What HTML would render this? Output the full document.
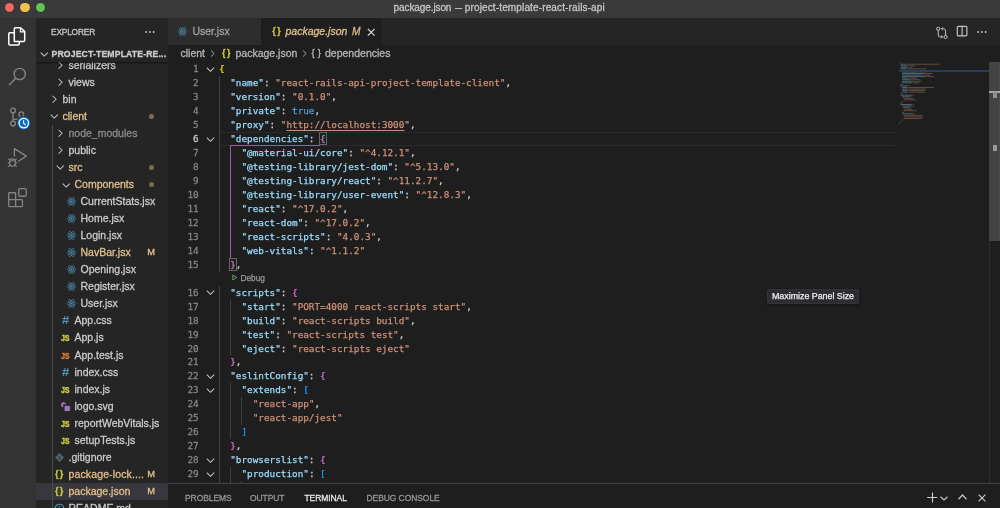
<!DOCTYPE html>
<html lang="en"><head><meta charset="utf-8"><title>package.json — project-template-react-rails-api</title>
<style>
*{box-sizing:border-box;margin:0;padding:0}
html,body{width:1000px;height:508px;overflow:hidden;background:#1e1e1e}
body{position:relative;font-family:"Liberation Sans",sans-serif;color:#ccc;-webkit-font-smoothing:antialiased}
.abs,#titlebar,#activity,#sidebar,#tabs,#crumbs,#editor,#panel,.g,.ln,.cl,.fold,.tr,.tw,.tl,.fi,.ti,.dot,.bM{position:absolute}
#titlebar{left:0;top:0;width:1000px;height:18px;background:#3a3a3a}
#titlebar .t{position:absolute;left:0;width:1000px;top:0;height:16px;line-height:16px;text-align:center;font-size:10px;color:#c8c8c8;letter-spacing:0.03px}
.light{position:absolute;top:2.9px;width:9.6px;height:9.6px;border-radius:50%;box-shadow:0 0 0 0.5px #2c2c2c}
#activity{left:0;top:18px;width:36px;height:490px;background:#333}
#sidebar{left:36px;top:18px;width:132px;height:490px;background:#252526;overflow:hidden}
#tabs{left:168px;top:18px;width:832px;height:27px;background:#252526}
#crumbs{left:168px;top:45px;width:832px;height:17px;background:#1e1e1e;font-size:10.5px;color:#b8b8b8}
#editor{left:0;top:0;width:1000px;height:484px;overflow:hidden;pointer-events:none}
.ln{left:168px;width:30.7px;text-align:right;height:13.97px;line-height:13.97px;font-family:"DejaVu Sans Mono","Liberation Mono",monospace;font-size:9.33px;color:#858585}
.ln.act{color:#c6c6c6}
.cl{-webkit-text-stroke:0.25px;left:219px;height:13.97px;line-height:13.97px;white-space:pre;font-family:"DejaVu Sans Mono","Liberation Mono",monospace;font-size:9.33px;color:#d4d4d4}
.k{color:#9cdcfe}.s{color:#ce9178}.b{color:#569cd6}
.u{text-decoration:underline;text-underline-offset:1.5px;text-decoration-thickness:1px}
.bm{outline:1px solid #646464;outline-offset:-0.5px;background:rgba(0,100,0,0.1)}
.fold{left:203.6px;width:13px;height:13px}
.g{width:1px}
#mm i{position:absolute;height:1.1px;display:block}
.lens{left:231px;font-family:"Liberation Sans",sans-serif;font-size:8.3px;color:#999}
.lens .play{width:7px;height:7px;vertical-align:-0.5px;margin-right:2.5px}
.tr{left:0;width:168px;height:17.03px}
.tr.sel{background:#37373d}
.tw{top:2.3px;width:12.5px;height:12.5px}
.tl{top:0;height:17.03px;line-height:17.03px;font-size:10.5px;white-space:nowrap}
.fi{top:3px;width:11px;height:11px}
.ti{top:0;height:17.03px;line-height:17.03px;font-family:"Liberation Sans",sans-serif}
.dot{left:148.7px;top:6px;width:5px;height:5px;border-radius:50%;background:#7d6c52}
.bM{left:147.3px;top:0;line-height:17.03px;font-size:9.3px;color:#e2c08d}
</style></head><body>
<div id="root" style="position:absolute;left:0;top:0;width:1000px;height:508px;will-change:transform;-webkit-text-stroke:0.28px">

<div id="titlebar">
  <div class="light" style="left:4.7px;background:#ec6a5f"></div>
  <div class="light" style="left:20.2px;background:#f5bf4f"></div>
  <div class="light" style="left:35.7px;background:#61c455"></div>
  <div class="t" style="text-align:left;left:393.6px;white-space:nowrap"><span style="letter-spacing:-0.1px">package.json</span> <span style="display:inline-block;transform:scaleX(0.7);transform-origin:0 50%;margin-right:-3px;margin-left:0.8px">—</span> <span style="letter-spacing:0.14px">project-template-react-rails-api</span></div>
</div>

<div id="activity">
  <!-- files -->
  <svg class="abs" style="left:6px;top:7px" width="22" height="22" viewBox="0 0 22 22" fill="none" stroke="#fff" stroke-width="1.5" stroke-linejoin="round">
    <path d="M8.3 16.5 V3.8 a1 1 0 0 1 1-1 H14.6 L18.7 6.6 V15.5 a1 1 0 0 1 -1 1 Z"/>
    <path d="M14.4 3 V6.9 H18.5" stroke-width="1.2"/>
    <path d="M8.3 7.8 H3.8 a1 1 0 0 0 -1 1 V19.1 a1 1 0 0 0 1 1 H12.2 a1 1 0 0 0 1 -1 V16.5"/>
  </svg>
  <!-- search -->
  <svg class="abs" style="left:6px;top:45px" width="24" height="24" viewBox="0 0 24 24" fill="none" stroke="#858585" stroke-width="1.4">
    <circle cx="13.7" cy="11" r="5.6"/><path d="M9.7 15.2 L3 22.3"/>
  </svg>
  <!-- scm -->
  <svg class="abs" style="left:6px;top:86px" width="26" height="28" viewBox="0 0 26 28" fill="none" stroke="#858585" stroke-width="1.3">
    <circle cx="7" cy="6.6" r="2.4"/><circle cx="7" cy="19.6" r="2.4"/><circle cx="15.3" cy="10.3" r="2.4"/>
    <path d="M7 9 V17.2 M15.3 12.7 C15.3 15.3 11 15 7 15.6"/>
    <circle cx="17.8" cy="19.1" r="7" fill="#0a6cc4" stroke="#2f2f2f" stroke-width="0.9"/>
    <circle cx="17.8" cy="19.1" r="4.7" stroke="#fff" stroke-width="1.3"/>
    <path d="M17.6 16.3 V19.3 L19.8 20.9" stroke="#fff" stroke-width="1.1"/>
  </svg>
  <!-- debug -->
  <svg class="abs" style="left:0;top:122px" width="36" height="36" viewBox="0 0 36 36" fill="none" stroke="#858585" stroke-width="1.3" stroke-linejoin="round">
    <path d="M14.4 16.6 V8.6 L26.4 16.1 L18.3 21.3"/>
    <ellipse cx="12.5" cy="22.6" rx="2.9" ry="3.7"/>
    <path d="M10 20.8 h5 M7.6 22.8 h2 M15.4 22.8 h2 M8.2 18.6 l2 1.7 M16.8 18.6 l-2 1.7 M8.2 26.8 l2 -1.8 M16.8 26.8 l-2 -1.8" stroke-width="1.1"/>
  </svg>
  <!-- extensions -->
  <svg class="abs" style="left:6px;top:168px" width="24" height="24" viewBox="0 0 24 24" fill="none" stroke="#858585" stroke-width="1.3" stroke-linejoin="round">
    <path d="M3.55 6.75 H8.8 a0.8 0.8 0 0 1 0.8 0.8 V13.7 H15.65 a0.8 0.8 0 0 1 0.8 0.8 V19.75 a0.8 0.8 0 0 1 -0.8 0.8 H3.55 a0.8 0.8 0 0 1 -0.8 -0.8 V7.55 a0.8 0.8 0 0 1 0.8 -0.8 Z M2.75 13.7 H9.6 V20.55"/>
    <rect x="12.75" y="2.55" width="7.5" height="7.7" rx="1.3"/>
  </svg>
</div>

<div id="sidebar">
  <div class="abs" style="left:0;top:0;width:132px;height:490px">
    <div style="position:absolute;left:-36px;top:-18px;width:168px;height:508px">
<div class="tr" style="top:57.00px"><svg class="tw" style="left:53.8px" viewBox="0 0 16 16"><path d="M5.8 3.5 L10.3 8 L5.8 12.5" fill="none" stroke="#c5c5c5" stroke-width="1.3"/></svg><span class="tl" style="left:68.5px;color:#ccc">serializers</span></div>
<div class="tr" style="top:74.03px"><svg class="tw" style="left:53.8px" viewBox="0 0 16 16"><path d="M5.8 3.5 L10.3 8 L5.8 12.5" fill="none" stroke="#c5c5c5" stroke-width="1.3"/></svg><span class="tl" style="left:68.5px;color:#ccc">views</span></div>
<div class="tr" style="top:91.06px"><svg class="tw" style="left:47.8px" viewBox="0 0 16 16"><path d="M5.8 3.5 L10.3 8 L5.8 12.5" fill="none" stroke="#c5c5c5" stroke-width="1.3"/></svg><span class="tl" style="left:62.5px;color:#ccc">bin</span></div>
<div class="tr" style="top:108.09px"><svg class="tw" style="left:47.8px" viewBox="0 0 16 16"><path d="M3.5 5.8 L8 10.3 L12.5 5.8" fill="none" stroke="#c5c5c5" stroke-width="1.3"/></svg><span class="tl" style="left:62.5px;color:#e2c08d">client</span><span class="dot"></span></div>
<div class="tr" style="top:125.12px"><svg class="tw" style="left:53.8px" viewBox="0 0 16 16"><path d="M5.8 3.5 L10.3 8 L5.8 12.5" fill="none" stroke="#c5c5c5" stroke-width="1.3"/></svg><span class="tl" style="left:68.5px;color:#8c8c8c">node_modules</span></div>
<div class="tr" style="top:142.15px"><svg class="tw" style="left:53.8px" viewBox="0 0 16 16"><path d="M5.8 3.5 L10.3 8 L5.8 12.5" fill="none" stroke="#c5c5c5" stroke-width="1.3"/></svg><span class="tl" style="left:68.5px;color:#ccc">public</span></div>
<div class="tr" style="top:159.18px"><svg class="tw" style="left:53.8px" viewBox="0 0 16 16"><path d="M3.5 5.8 L8 10.3 L12.5 5.8" fill="none" stroke="#c5c5c5" stroke-width="1.3"/></svg><span class="tl" style="left:68.5px;color:#e2c08d">src</span><span class="dot"></span></div>
<div class="tr" style="top:176.21px"><svg class="tw" style="left:59.8px" viewBox="0 0 16 16"><path d="M3.5 5.8 L8 10.3 L12.5 5.8" fill="none" stroke="#c5c5c5" stroke-width="1.3"/></svg><span class="tl" style="left:74.5px;color:#e2c08d">Components</span><span class="dot"></span></div>
<div class="tr" style="top:193.24px"><svg class="fi" style="left:66.0px" viewBox="-8 -8 16 16"><g fill="none" stroke="#4d93b2" stroke-width="0.8"><ellipse rx="6.6" ry="2.6"/><ellipse rx="6.6" ry="2.6" transform="rotate(60)"/><ellipse rx="6.6" ry="2.6" transform="rotate(120)"/></g><circle r="1.3" fill="#519aba"/></svg><span class="tl" style="left:80.5px;color:#ccc">CurrentStats.jsx</span></div>
<div class="tr" style="top:210.27px"><svg class="fi" style="left:66.0px" viewBox="-8 -8 16 16"><g fill="none" stroke="#4d93b2" stroke-width="0.8"><ellipse rx="6.6" ry="2.6"/><ellipse rx="6.6" ry="2.6" transform="rotate(60)"/><ellipse rx="6.6" ry="2.6" transform="rotate(120)"/></g><circle r="1.3" fill="#519aba"/></svg><span class="tl" style="left:80.5px;color:#ccc">Home.jsx</span></div>
<div class="tr" style="top:227.30px"><svg class="fi" style="left:66.0px" viewBox="-8 -8 16 16"><g fill="none" stroke="#4d93b2" stroke-width="0.8"><ellipse rx="6.6" ry="2.6"/><ellipse rx="6.6" ry="2.6" transform="rotate(60)"/><ellipse rx="6.6" ry="2.6" transform="rotate(120)"/></g><circle r="1.3" fill="#519aba"/></svg><span class="tl" style="left:80.5px;color:#ccc">Login.jsx</span></div>
<div class="tr" style="top:244.33px"><svg class="fi" style="left:66.0px" viewBox="-8 -8 16 16"><g fill="none" stroke="#4d93b2" stroke-width="0.8"><ellipse rx="6.6" ry="2.6"/><ellipse rx="6.6" ry="2.6" transform="rotate(60)"/><ellipse rx="6.6" ry="2.6" transform="rotate(120)"/></g><circle r="1.3" fill="#519aba"/></svg><span class="tl" style="left:80.5px;color:#e2c08d">NavBar.jsx</span><span class="bM">M</span></div>
<div class="tr" style="top:261.36px"><svg class="fi" style="left:66.0px" viewBox="-8 -8 16 16"><g fill="none" stroke="#4d93b2" stroke-width="0.8"><ellipse rx="6.6" ry="2.6"/><ellipse rx="6.6" ry="2.6" transform="rotate(60)"/><ellipse rx="6.6" ry="2.6" transform="rotate(120)"/></g><circle r="1.3" fill="#519aba"/></svg><span class="tl" style="left:80.5px;color:#ccc">Opening.jsx</span></div>
<div class="tr" style="top:278.39px"><svg class="fi" style="left:66.0px" viewBox="-8 -8 16 16"><g fill="none" stroke="#4d93b2" stroke-width="0.8"><ellipse rx="6.6" ry="2.6"/><ellipse rx="6.6" ry="2.6" transform="rotate(60)"/><ellipse rx="6.6" ry="2.6" transform="rotate(120)"/></g><circle r="1.3" fill="#519aba"/></svg><span class="tl" style="left:80.5px;color:#ccc">Register.jsx</span></div>
<div class="tr" style="top:295.42px"><svg class="fi" style="left:66.0px" viewBox="-8 -8 16 16"><g fill="none" stroke="#4d93b2" stroke-width="0.8"><ellipse rx="6.6" ry="2.6"/><ellipse rx="6.6" ry="2.6" transform="rotate(60)"/><ellipse rx="6.6" ry="2.6" transform="rotate(120)"/></g><circle r="1.3" fill="#519aba"/></svg><span class="tl" style="left:80.5px;color:#ccc">User.jsx</span></div>
<div class="tr" style="top:312.45px"><span class="ti" style="left:61.7px;color:#519aba;font-size:10px;font-weight:bold;transform:scaleX(1.3);transform-origin:0 50%;-webkit-text-stroke:0">#</span><span class="tl" style="left:74.5px;color:#ccc">App.css</span></div>
<div class="tr" style="top:329.48px"><span class="ti" style="left:61.1px;color:#cbcb41;font-size:9.6px;font-weight:bold;letter-spacing:-0.2px;transform:scaleX(0.74);transform-origin:0 50%;-webkit-text-stroke:0.45px">JS</span><span class="tl" style="left:74.5px;color:#ccc">App.js</span></div>
<div class="tr" style="top:346.51px"><span class="ti" style="left:61.1px;color:#e37933;font-size:9.6px;font-weight:bold;letter-spacing:-0.2px;transform:scaleX(0.74);transform-origin:0 50%;-webkit-text-stroke:0.45px">JS</span><span class="tl" style="left:74.5px;color:#ccc">App.test.js</span></div>
<div class="tr" style="top:363.54px"><span class="ti" style="left:61.7px;color:#519aba;font-size:10px;font-weight:bold;transform:scaleX(1.3);transform-origin:0 50%;-webkit-text-stroke:0">#</span><span class="tl" style="left:74.5px;color:#ccc">index.css</span></div>
<div class="tr" style="top:380.57px"><span class="ti" style="left:61.1px;color:#cbcb41;font-size:9.6px;font-weight:bold;letter-spacing:-0.2px;transform:scaleX(0.74);transform-origin:0 50%;-webkit-text-stroke:0.45px">JS</span><span class="tl" style="left:74.5px;color:#ccc">index.js</span></div>
<div class="tr" style="top:397.60px"><svg class="fi" style="left:59.8px" viewBox="0 0 11 11"><circle cx="3.5" cy="3.7" r="2.5" fill="#a074c4"/><circle cx="4.3" cy="4.4" r="1.3" fill="#252526"/><rect x="4.1" y="4.4" width="6.2" height="6.2" fill="#a074c4" stroke="#252526" stroke-width="0.9"/></svg><span class="tl" style="left:74.5px;color:#ccc">logo.svg</span></div>
<div class="tr" style="top:414.63px"><span class="ti" style="left:61.1px;color:#cbcb41;font-size:9.6px;font-weight:bold;letter-spacing:-0.2px;transform:scaleX(0.74);transform-origin:0 50%;-webkit-text-stroke:0.45px">JS</span><span class="tl" style="left:74.5px;color:#ccc">reportWebVitals.js</span></div>
<div class="tr" style="top:431.66px"><span class="ti" style="left:61.1px;color:#cbcb41;font-size:9.6px;font-weight:bold;letter-spacing:-0.2px;transform:scaleX(0.74);transform-origin:0 50%;-webkit-text-stroke:0.45px">JS</span><span class="tl" style="left:74.5px;color:#ccc">setupTests.js</span></div>
<div class="tr" style="top:448.69px"><svg class="fi" style="left:54.0px" viewBox="0 0 11 11"><rect x="2.3" y="2.3" width="6.4" height="6.4" transform="rotate(45 5.5 5.5)" fill="#4b6470"/><path d="M4.2 4 L6.5 6.3 M5.5 5.3 L5.5 7.5" stroke="#252526" stroke-width="0.8" fill="none"/></svg><span class="tl" style="left:68.5px;color:#ccc">.gitignore</span></div>
<div class="tr" style="top:465.72px"><span class="ti" style="left:54.9px;color:#cbcb41;font-size:9px;font-weight:bold;letter-spacing:1.4px">{}</span><span class="tl" style="left:68.5px;color:#e2c08d;letter-spacing:0.13px">package-lock....</span><span class="bM">M</span></div>
<div class="tr sel" style="top:482.75px"><span class="ti" style="left:54.9px;color:#cbcb41;font-size:9px;font-weight:bold;letter-spacing:1.4px">{}</span><span class="tl" style="left:68.5px;color:#e2c08d">package.json</span><span class="bM">M</span></div>
<div class="tr" style="top:499.78px"><svg class="fi" style="left:54.0px" viewBox="0 0 11 11"><circle cx="5.5" cy="5.5" r="4.3" fill="none" stroke="#519aba" stroke-width="1.1"/><path d="M5.5 5 L5.5 8 M5.5 3 L5.5 4" stroke="#519aba" stroke-width="1.1"/></svg><span class="tl" style="left:68.5px;color:#ccc">README.md</span></div>
      <div class="abs" style="left:51.6px;top:125px;width:1px;height:400px;background:#4c4c4c"></div>
    </div>
  </div>
  <div class="abs" style="left:0;top:0;width:132px;height:44px;background:#252526;box-shadow:0 1px 2px rgba(0,0,0,0.55)">
    <div class="abs" style="left:15px;top:8px;line-height:12px;font-size:8.4px;color:#c4c4c4;letter-spacing:-0.2px">EXPLORER</div>
    <svg class="abs" style="left:108px;top:11px" width="12" height="6" viewBox="0 0 12 6" fill="#c5c5c5"><circle cx="2.2" cy="3" r="0.95"/><circle cx="6" cy="3" r="0.95"/><circle cx="9.6" cy="3" r="0.95"/></svg>
    <svg class="abs" style="left:1.5px;top:29.5px" width="12.5" height="12.5" viewBox="0 0 16 16"><path d="M3.5 5.8 L8 10.3 L12.5 5.8" fill="none" stroke="#c5c5c5" stroke-width="1.3"/></svg>
    <div class="abs" style="left:15.5px;top:27.7px;height:17px;line-height:17px;font-size:8.7px;font-weight:bold;color:#ccc;white-space:nowrap;letter-spacing:0.13px">PROJECT-TEMPLATE-RE...</div>
  </div>
</div>

<div id="tabs">
  <div class="abs" style="left:0;top:0;width:92.5px;height:27px;background:#2d2d2d">
    <svg class="abs" style="left:9px;top:8px" width="11" height="11" viewBox="-8 -8 16 16"><g fill="none" stroke="#4d93b2" stroke-width="0.8"><ellipse rx="6.6" ry="2.6"/><ellipse rx="6.6" ry="2.6" transform="rotate(60)"/><ellipse rx="6.6" ry="2.6" transform="rotate(120)"/></g><circle r="1.3" fill="#519aba"/></svg>
    <span class="abs" style="left:24.5px;top:0;line-height:27px;font-size:10.45px;color:#a2a2a2">User.jsx</span>
  </div>
  <div class="abs" style="left:92.5px;top:0;width:121px;height:27px;background:#1e1e1e">
    <span class="abs" style="left:11.8px;top:0;line-height:26px;font-size:9px;font-weight:bold;color:#cbcb41;letter-spacing:1.5px">{}</span>
    <span class="abs" style="left:25px;top:0;line-height:27px;font-size:10.5px;color:#e2c08d;font-style:italic;white-space:nowrap">package.json <span style="font-size:10.2px;color:#d9b988;margin-left:1.8px">M</span></span>
    <svg class="abs" style="left:106.6px;top:9.6px" width="8.4" height="8.4" viewBox="0 0 8 8"><path d="M0.8 0.8 L7.2 7.2 M7.2 0.8 L0.8 7.2" stroke="#dcdcdc" stroke-width="1.15"/></svg>
  </div>
  <!-- right actions -->
  <svg class="abs" style="left:767px;top:6.5px" width="14" height="14" viewBox="0 0 14 14" fill="none" stroke="#c5c5c5" stroke-width="1">
    <circle cx="3.2" cy="3.8" r="1.6"/><circle cx="10.6" cy="11.9" r="1.6"/>
    <path d="M3.2 5.4 V9.9 a2 2 0 0 0 2 2 H7.4 M6.2 10.5 L7.6 11.9 L6.2 13.3 M10.6 10.3 V5.8 a2 2 0 0 0 -2 -2 H6.6 M7.8 2.4 L6.4 3.8 L7.8 5.2"/>
  </svg>
  <svg class="abs" style="left:787.9px;top:7px" width="12" height="12" viewBox="0 0 12 12" fill="none" stroke="#c5c5c5" stroke-width="1">
    <rect x="1.3" y="1.3" width="9.6" height="9.6" rx="1.3" stroke-width="1.15"/><path d="M6.1 1.3 V10.9" stroke-width="1.15"/>
  </svg>
  <svg class="abs" style="left:808.3px;top:11px" width="12" height="6" viewBox="0 0 12 6" fill="#c5c5c5"><circle cx="2.2" cy="3" r="0.95"/><circle cx="6" cy="3" r="0.95"/><circle cx="9.6" cy="3" r="0.95"/></svg>
</div>

<div id="crumbs">
  <span class="abs" style="left:12.5px;top:0;line-height:17px;white-space:nowrap">client</span>
  <svg class="abs" style="left:38.8px;top:3.2px" width="11" height="11" viewBox="0 0 16 16"><path d="M5.8 3.5 L10.4 8 L5.8 12.5" fill="none" stroke="#b4b4b4" stroke-width="1.35"/></svg>
  <span class="abs" style="left:54px;top:0;line-height:16.5px;font-size:9px;font-weight:bold;color:#cbcb41;letter-spacing:1.5px">{}</span>
  <span class="abs" style="left:67.5px;top:0;line-height:17px;white-space:nowrap">package.json</span>
  <svg class="abs" style="left:130.8px;top:3.2px" width="11" height="11" viewBox="0 0 16 16"><path d="M5.8 3.5 L10.4 8 L5.8 12.5" fill="none" stroke="#b4b4b4" stroke-width="1.35"/></svg>
  <span class="abs" style="left:143.5px;top:0;line-height:16.5px;font-size:9.6px;color:#bdbdbd;letter-spacing:3.1px">{}</span>
  <span class="abs" style="left:157px;top:0;line-height:17px;white-space:nowrap">dependencies</span>
</div>

<div id="editor">
  <!-- current line -->
  <div class="abs" style="left:219px;top:131.95px;width:676px;height:13.97px;border-top:1px solid #2b2b2b;border-bottom:1px solid #2b2b2b"></div>
<div class="g" style="left:219.00px;top:76.07px;height:195.58px;background:#404040"></div>
<div class="g" style="left:219.00px;top:285.62px;height:223.52px;background:#404040"></div>
<div class="g" style="left:230.23px;top:299.59px;height:55.88px;background:#404040"></div>
<div class="g" style="left:230.23px;top:383.41px;height:55.88px;background:#404040"></div>
<div class="g" style="left:230.23px;top:467.23px;height:41.91px;background:#404040"></div>
<div class="g" style="left:241.47px;top:397.38px;height:27.94px;background:#404040"></div>
<div class="g" style="left:241.47px;top:481.20px;height:27.94px;background:#404040"></div>
<div class="g" style="left:230.23px;top:144.92px;height:113.76px;background:#9d5d9b"></div>
<div class="g" style="left:230.23px;top:144.92px;height:1px;width:89.87px;background:#9d5d9b"></div>
<div class="g" style="left:230.23px;top:257.68px;height:1px;width:5.62px;background:#9d5d9b"></div>
<div class="ln" style="top:62.10px">1</div>
<svg class="fold" style="top:62.79px" viewBox="0 0 16 16"><path d="M3.5 5.8 L8 10.3 L12.5 5.8" fill="none" stroke="#c5c5c5" stroke-width="1.3"/></svg>
<div class="cl" style="top:62.10px"><span style="color:#ffd700">{</span></div>
<div class="ln" style="top:76.07px">2</div>
<div class="cl" style="top:76.07px">  <span class="k">"name"</span>: <span class="s">"react-rails-api-project-template-client"</span>,</div>
<div class="ln" style="top:90.04px">3</div>
<div class="cl" style="top:90.04px">  <span class="k">"version"</span>: <span class="s">"0.1.0"</span>,</div>
<div class="ln" style="top:104.01px">4</div>
<div class="cl" style="top:104.01px">  <span class="k">"private"</span>: <span class="b">true</span>,</div>
<div class="ln" style="top:117.98px">5</div>
<div class="cl" style="top:117.98px">  <span class="k">"proxy"</span>: <span class="s">"<span class="u">http://localhost:3000</span>"</span>,</div>
<div class="ln act" style="top:131.95px">6</div>
<svg class="fold" style="top:132.64px" viewBox="0 0 16 16"><path d="M3.5 5.8 L8 10.3 L12.5 5.8" fill="none" stroke="#c5c5c5" stroke-width="1.3"/></svg>
<div class="cl" style="top:131.95px">  <span class="k">"dependencies"</span>: <span class="bm" style="color:#da70d6">{</span></div>
<div class="ln" style="top:145.92px">7</div>
<div class="cl" style="top:145.92px">    <span class="k">"@material-ui/core"</span>: <span class="s">"^4.12.1"</span>,</div>
<div class="ln" style="top:159.89px">8</div>
<div class="cl" style="top:159.89px">    <span class="k">"@testing-library/jest-dom"</span>: <span class="s">"^5.13.0"</span>,</div>
<div class="ln" style="top:173.86px">9</div>
<div class="cl" style="top:173.86px">    <span class="k">"@testing-library/react"</span>: <span class="s">"^11.2.7"</span>,</div>
<div class="ln" style="top:187.83px">10</div>
<div class="cl" style="top:187.83px">    <span class="k">"@testing-library/user-event"</span>: <span class="s">"^12.8.3"</span>,</div>
<div class="ln" style="top:201.80px">11</div>
<div class="cl" style="top:201.80px">    <span class="k">"react"</span>: <span class="s">"^17.0.2"</span>,</div>
<div class="ln" style="top:215.77px">12</div>
<div class="cl" style="top:215.77px">    <span class="k">"react-dom"</span>: <span class="s">"^17.0.2"</span>,</div>
<div class="ln" style="top:229.74px">13</div>
<div class="cl" style="top:229.74px">    <span class="k">"react-scripts"</span>: <span class="s">"4.0.3"</span>,</div>
<div class="ln" style="top:243.71px">14</div>
<div class="cl" style="top:243.71px">    <span class="k">"web-vitals"</span>: <span class="s">"^1.1.2"</span></div>
<div class="ln" style="top:257.68px">15</div>
<div class="cl" style="top:257.68px">  <span class="bm" style="color:#da70d6">}</span>,</div>
<div class="cl lens" style="top:271.65px"><svg class="play" viewBox="0 0 16 16"><path d="M4 2.5 L13 8 L4 13.5 Z" fill="none" stroke="#89d185" stroke-width="1.6" stroke-linejoin="round"/></svg><span>Debug</span></div>
<div class="ln" style="top:285.62px">16</div>
<svg class="fold" style="top:286.31px" viewBox="0 0 16 16"><path d="M3.5 5.8 L8 10.3 L12.5 5.8" fill="none" stroke="#c5c5c5" stroke-width="1.3"/></svg>
<div class="cl" style="top:285.62px">  <span class="k">"scripts"</span>: <span style="color:#da70d6">{</span></div>
<div class="ln" style="top:299.59px">17</div>
<div class="cl" style="top:299.59px">    <span class="k">"start"</span>: <span class="s">"PORT=4000 react-scripts start"</span>,</div>
<div class="ln" style="top:313.56px">18</div>
<div class="cl" style="top:313.56px">    <span class="k">"build"</span>: <span class="s">"react-scripts build"</span>,</div>
<div class="ln" style="top:327.53px">19</div>
<div class="cl" style="top:327.53px">    <span class="k">"test"</span>: <span class="s">"react-scripts test"</span>,</div>
<div class="ln" style="top:341.50px">20</div>
<div class="cl" style="top:341.50px">    <span class="k">"eject"</span>: <span class="s">"react-scripts eject"</span></div>
<div class="ln" style="top:355.47px">21</div>
<div class="cl" style="top:355.47px">  <span style="color:#da70d6">}</span>,</div>
<div class="ln" style="top:369.44px">22</div>
<svg class="fold" style="top:370.13px" viewBox="0 0 16 16"><path d="M3.5 5.8 L8 10.3 L12.5 5.8" fill="none" stroke="#c5c5c5" stroke-width="1.3"/></svg>
<div class="cl" style="top:369.44px">  <span class="k">"eslintConfig"</span>: <span style="color:#da70d6">{</span></div>
<div class="ln" style="top:383.41px">23</div>
<svg class="fold" style="top:384.10px" viewBox="0 0 16 16"><path d="M3.5 5.8 L8 10.3 L12.5 5.8" fill="none" stroke="#c5c5c5" stroke-width="1.3"/></svg>
<div class="cl" style="top:383.41px">    <span class="k">"extends"</span>: <span style="color:#179fff">[</span></div>
<div class="ln" style="top:397.38px">24</div>
<div class="cl" style="top:397.38px">      <span class="s">"react-app"</span>,</div>
<div class="ln" style="top:411.35px">25</div>
<div class="cl" style="top:411.35px">      <span class="s">"react-app/jest"</span></div>
<div class="ln" style="top:425.32px">26</div>
<div class="cl" style="top:425.32px">    <span style="color:#179fff">]</span></div>
<div class="ln" style="top:439.29px">27</div>
<div class="cl" style="top:439.29px">  <span style="color:#da70d6">}</span>,</div>
<div class="ln" style="top:453.26px">28</div>
<svg class="fold" style="top:453.95px" viewBox="0 0 16 16"><path d="M3.5 5.8 L8 10.3 L12.5 5.8" fill="none" stroke="#c5c5c5" stroke-width="1.3"/></svg>
<div class="cl" style="top:453.26px">  <span class="k">"browserslist"</span>: <span style="color:#da70d6">{</span></div>
<div class="ln" style="top:467.23px">29</div>
<svg class="fold" style="top:467.92px" viewBox="0 0 16 16"><path d="M3.5 5.8 L8 10.3 L12.5 5.8" fill="none" stroke="#c5c5c5" stroke-width="1.3"/></svg>
<div class="cl" style="top:467.23px">    <span class="k">"production"</span>: <span style="color:#179fff">[</span></div>
<div class="ln" style="top:481.20px">30</div>
<div class="cl" style="top:481.20px">      <span class="s">"&gt;0.2%"</span>,</div>
  <!-- minimap -->
  <svg id="mm" class="abs" style="left:899px;top:62px;opacity:0.4" width="90" height="120" viewBox="0 0 90 120"><rect x="0.00" y="0.20" width="0.78" height="0.95" fill="#d4d4d4"/><rect x="1.55" y="1.75" width="4.65" height="0.95" fill="#9cdcfe"/><rect x="6.20" y="1.75" width="0.78" height="0.95" fill="#d4d4d4"/><rect x="7.75" y="1.75" width="31.78" height="0.95" fill="#ce9178"/><rect x="39.52" y="1.75" width="0.78" height="0.95" fill="#d4d4d4"/><rect x="1.55" y="3.30" width="6.98" height="0.95" fill="#9cdcfe"/><rect x="8.53" y="3.30" width="0.78" height="0.95" fill="#d4d4d4"/><rect x="10.08" y="3.30" width="5.42" height="0.95" fill="#ce9178"/><rect x="15.50" y="3.30" width="0.78" height="0.95" fill="#d4d4d4"/><rect x="1.55" y="4.85" width="6.98" height="0.95" fill="#9cdcfe"/><rect x="8.53" y="4.85" width="0.78" height="0.95" fill="#d4d4d4"/><rect x="10.08" y="4.85" width="3.88" height="0.95" fill="#569cd6"/><rect x="1.55" y="6.40" width="5.42" height="0.95" fill="#9cdcfe"/><rect x="6.98" y="6.40" width="0.78" height="0.95" fill="#d4d4d4"/><rect x="8.53" y="6.40" width="17.82" height="0.95" fill="#ce9178"/><rect x="26.35" y="6.40" width="0.78" height="0.95" fill="#d4d4d4"/><rect x="1.55" y="7.95" width="10.85" height="0.95" fill="#9cdcfe"/><rect x="12.40" y="7.95" width="0.78" height="0.95" fill="#d4d4d4"/><rect x="13.95" y="7.95" width="0.78" height="0.95" fill="#d4d4d4"/><rect x="3.10" y="9.50" width="14.72" height="0.95" fill="#9cdcfe"/><rect x="17.82" y="9.50" width="0.78" height="0.95" fill="#d4d4d4"/><rect x="19.38" y="9.50" width="6.98" height="0.95" fill="#ce9178"/><rect x="26.35" y="9.50" width="0.78" height="0.95" fill="#d4d4d4"/><rect x="3.10" y="11.05" width="20.93" height="0.95" fill="#9cdcfe"/><rect x="24.03" y="11.05" width="0.78" height="0.95" fill="#d4d4d4"/><rect x="25.57" y="11.05" width="6.98" height="0.95" fill="#ce9178"/><rect x="32.55" y="11.05" width="0.78" height="0.95" fill="#d4d4d4"/><rect x="3.10" y="12.60" width="18.60" height="0.95" fill="#9cdcfe"/><rect x="21.70" y="12.60" width="0.78" height="0.95" fill="#d4d4d4"/><rect x="23.25" y="12.60" width="6.98" height="0.95" fill="#ce9178"/><rect x="30.23" y="12.60" width="0.78" height="0.95" fill="#d4d4d4"/><rect x="3.10" y="14.15" width="22.48" height="0.95" fill="#9cdcfe"/><rect x="25.57" y="14.15" width="0.78" height="0.95" fill="#d4d4d4"/><rect x="27.12" y="14.15" width="6.98" height="0.95" fill="#ce9178"/><rect x="34.10" y="14.15" width="0.78" height="0.95" fill="#d4d4d4"/><rect x="3.10" y="15.70" width="5.42" height="0.95" fill="#9cdcfe"/><rect x="8.53" y="15.70" width="0.78" height="0.95" fill="#d4d4d4"/><rect x="10.08" y="15.70" width="6.98" height="0.95" fill="#ce9178"/><rect x="17.05" y="15.70" width="0.78" height="0.95" fill="#d4d4d4"/><rect x="3.10" y="17.25" width="8.53" height="0.95" fill="#9cdcfe"/><rect x="11.62" y="17.25" width="0.78" height="0.95" fill="#d4d4d4"/><rect x="13.18" y="17.25" width="6.98" height="0.95" fill="#ce9178"/><rect x="20.15" y="17.25" width="0.78" height="0.95" fill="#d4d4d4"/><rect x="3.10" y="18.80" width="11.62" height="0.95" fill="#9cdcfe"/><rect x="14.72" y="18.80" width="0.78" height="0.95" fill="#d4d4d4"/><rect x="16.28" y="18.80" width="5.42" height="0.95" fill="#ce9178"/><rect x="21.70" y="18.80" width="0.78" height="0.95" fill="#d4d4d4"/><rect x="3.10" y="20.35" width="9.30" height="0.95" fill="#9cdcfe"/><rect x="12.40" y="20.35" width="0.78" height="0.95" fill="#d4d4d4"/><rect x="13.95" y="20.35" width="6.20" height="0.95" fill="#ce9178"/><rect x="1.55" y="21.90" width="1.55" height="0.95" fill="#d4d4d4"/><rect x="1.55" y="23.45" width="6.98" height="0.95" fill="#9cdcfe"/><rect x="8.53" y="23.45" width="0.78" height="0.95" fill="#d4d4d4"/><rect x="10.08" y="23.45" width="0.78" height="0.95" fill="#d4d4d4"/><rect x="3.10" y="25.00" width="5.42" height="0.95" fill="#9cdcfe"/><rect x="8.53" y="25.00" width="0.78" height="0.95" fill="#d4d4d4"/><rect x="10.08" y="25.00" width="24.03" height="0.95" fill="#ce9178"/><rect x="34.10" y="25.00" width="0.78" height="0.95" fill="#d4d4d4"/><rect x="3.10" y="26.55" width="5.42" height="0.95" fill="#9cdcfe"/><rect x="8.53" y="26.55" width="0.78" height="0.95" fill="#d4d4d4"/><rect x="10.08" y="26.55" width="16.28" height="0.95" fill="#ce9178"/><rect x="26.35" y="26.55" width="0.78" height="0.95" fill="#d4d4d4"/><rect x="3.10" y="28.10" width="4.65" height="0.95" fill="#9cdcfe"/><rect x="7.75" y="28.10" width="0.78" height="0.95" fill="#d4d4d4"/><rect x="9.30" y="28.10" width="15.50" height="0.95" fill="#ce9178"/><rect x="24.80" y="28.10" width="0.78" height="0.95" fill="#d4d4d4"/><rect x="3.10" y="29.65" width="5.42" height="0.95" fill="#9cdcfe"/><rect x="8.53" y="29.65" width="0.78" height="0.95" fill="#d4d4d4"/><rect x="10.08" y="29.65" width="16.28" height="0.95" fill="#ce9178"/><rect x="1.55" y="31.20" width="1.55" height="0.95" fill="#d4d4d4"/><rect x="1.55" y="32.75" width="10.85" height="0.95" fill="#9cdcfe"/><rect x="12.40" y="32.75" width="0.78" height="0.95" fill="#d4d4d4"/><rect x="13.95" y="32.75" width="0.78" height="0.95" fill="#d4d4d4"/><rect x="3.10" y="34.30" width="6.98" height="0.95" fill="#9cdcfe"/><rect x="10.08" y="34.30" width="0.78" height="0.95" fill="#d4d4d4"/><rect x="11.62" y="34.30" width="0.78" height="0.95" fill="#d4d4d4"/><rect x="4.65" y="35.85" width="8.53" height="0.95" fill="#ce9178"/><rect x="13.18" y="35.85" width="0.78" height="0.95" fill="#d4d4d4"/><rect x="4.65" y="37.40" width="12.40" height="0.95" fill="#ce9178"/><rect x="3.10" y="38.95" width="0.78" height="0.95" fill="#d4d4d4"/><rect x="1.55" y="40.50" width="1.55" height="0.95" fill="#d4d4d4"/><rect x="1.55" y="42.05" width="10.85" height="0.95" fill="#9cdcfe"/><rect x="12.40" y="42.05" width="0.78" height="0.95" fill="#d4d4d4"/><rect x="13.95" y="42.05" width="0.78" height="0.95" fill="#d4d4d4"/><rect x="3.10" y="43.60" width="9.30" height="0.95" fill="#9cdcfe"/><rect x="12.40" y="43.60" width="0.78" height="0.95" fill="#d4d4d4"/><rect x="13.95" y="43.60" width="0.78" height="0.95" fill="#d4d4d4"/><rect x="4.65" y="45.15" width="5.42" height="0.95" fill="#ce9178"/><rect x="10.08" y="45.15" width="0.78" height="0.95" fill="#d4d4d4"/><rect x="4.65" y="46.70" width="7.75" height="0.95" fill="#ce9178"/><rect x="12.40" y="46.70" width="0.78" height="0.95" fill="#d4d4d4"/><rect x="4.65" y="48.25" width="13.18" height="0.95" fill="#ce9178"/><rect x="3.10" y="49.80" width="1.55" height="0.95" fill="#d4d4d4"/><rect x="3.10" y="51.35" width="10.08" height="0.95" fill="#9cdcfe"/><rect x="13.18" y="51.35" width="0.78" height="0.95" fill="#d4d4d4"/><rect x="14.72" y="51.35" width="0.78" height="0.95" fill="#d4d4d4"/><rect x="4.65" y="52.90" width="17.82" height="0.95" fill="#ce9178"/><rect x="22.48" y="52.90" width="0.78" height="0.95" fill="#d4d4d4"/><rect x="4.65" y="54.45" width="18.60" height="0.95" fill="#ce9178"/><rect x="23.25" y="54.45" width="0.78" height="0.95" fill="#d4d4d4"/><rect x="4.65" y="56.00" width="17.82" height="0.95" fill="#ce9178"/><rect x="3.10" y="57.55" width="0.78" height="0.95" fill="#d4d4d4"/><rect x="1.55" y="59.10" width="0.78" height="0.95" fill="#d4d4d4"/><rect x="0.00" y="60.65" width="0.78" height="0.95" fill="#d4d4d4"/></svg>
  <div class="abs" style="left:899px;top:70px;width:90px;height:1.6px;background:#263e5b"></div>
  <!-- scrollbar -->
  <div class="abs" style="left:989px;top:62px;width:11px;height:422px;border-left:1px solid #2e2e2e"></div>
  <div class="abs" style="left:989px;top:62px;width:11px;height:178.5px;background:#434343"></div>
  <div class="abs" style="left:998.5px;top:62px;width:1px;height:178.5px;background:#505050;opacity:.6"></div>
  <div class="abs" style="left:989px;top:91.3px;width:11px;height:1.5px;background:#a8a8a8"></div>
  <div class="abs" style="left:992.5px;top:92px;width:4px;height:5.5px;background:#8f8f8f"></div>
  <div class="abs" style="left:993px;top:145px;width:4px;height:6px;background:#9a9a9a"></div>
</div>

<div id="panel" style="left:168px;top:483px;width:832px;height:25px;background:#1e1e1e;border-top:1px solid #434343">
  <span class="abs pt" style="left:17px">PROBLEMS</span>
  <span class="abs pt" style="left:82px">OUTPUT</span>
  <span class="abs pt" style="left:136.5px;color:#e7e7e7">TERMINAL</span>
  <span class="abs pt" style="left:198.5px">DEBUG CONSOLE</span>
  <svg class="abs" style="left:758px;top:8px" width="13" height="13" viewBox="0 0 13 13"><path d="M6.5 0.6 V10.6 M1.2 5.5 H11.2" stroke="#d0d0d0" stroke-width="1.1"/></svg>
  <svg class="abs" style="left:772px;top:11.5px" width="8" height="5" viewBox="0 0 8 5"><path d="M0.5 0.7 L4 4 L7.5 0.7" fill="none" stroke="#c5c5c5" stroke-width="1.2"/></svg>
  <svg class="abs" style="left:789.5px;top:9.8px" width="9" height="6" viewBox="0 0 9 6"><path d="M0.5 5.2 L4.5 1 L8.5 5.2" fill="none" stroke="#c5c5c5" stroke-width="1.25"/></svg>
  <svg class="abs" style="left:810px;top:10px" width="8" height="8" viewBox="0 0 8 8"><path d="M0.6 0.6 L7.4 7.4 M7.4 0.6 L0.6 7.4" stroke="#c5c5c5" stroke-width="1.25"/></svg>
</div>
<style>.pt{top:7px;line-height:14px;font-size:8.5px;color:#969696;white-space:nowrap;letter-spacing:-0.08px}</style>

<!-- tooltip -->
<div class="abs" style="left:767px;top:289.2px;width:92px;height:14.8px;background:#2d2d31;border:1px solid #343438;border-radius:1.5px;box-shadow:0 1px 3px rgba(0,0,0,0.35)">
  <div style="position:absolute;left:0;top:0;width:90px;height:12.5px;line-height:12.3px;text-align:center;font-size:8.86px;color:#f0f0f0;-webkit-text-stroke:0.25px;white-space:nowrap">Maximize Panel Size</div>
</div>

</div>
</body></html>
